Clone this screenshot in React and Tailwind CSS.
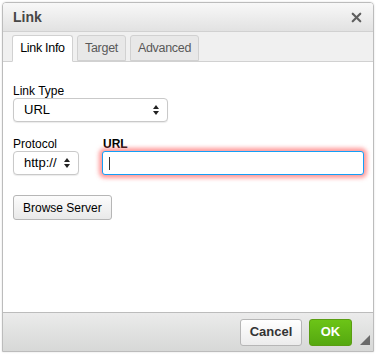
import { X } from 'lucide-react'

function SelectArrows() {
  return (
    <svg width="6" height="10" viewBox="0 0 6 10" className="shrink-0">
      <path d="M3 0 L6 4 L0 4 Z" fill="#222" />
      <path d="M3 10 L6 6 L0 6 Z" fill="#222" />
    </svg>
  )
}

function Select({ value, className }) {
  return (
    <div className={`flex items-center justify-between h-[24px] pl-[10px] pr-[8px] bg-white border border-[#c9c9c9] rounded-[4px] shadow-[0_1px_1px_rgba(0,0,0,0.08)] text-[13px] text-black ${className}`}>
      <span>{value}</span>
      <SelectArrows />
    </div>
  )
}

export default function App() {
  const tabs = [
    { label: 'Link Info', w: 'w-[61px]' },
    { label: 'Target', w: 'w-[49px]' },
    { label: 'Advanced', w: 'w-[69px]' },
  ]

  return (
    <div className="w-[376px] h-[355px] bg-white p-[2px] pb-[3px] font-['Liberation_Sans',Arial,sans-serif]">
      <div className="w-[372px] h-[350px] flex flex-col border border-[#bcbcbc] rounded-t-[4px] overflow-hidden shadow-[0_0_2px_rgba(0,0,0,0.15)]">

        {/* Title bar */}
        <div className="h-[29px] shrink-0 flex items-center justify-between px-[10px] bg-gradient-to-b from-[#f8f8f8] to-[#e2e2e2] border-b border-[#d1d1d1]">
          <span className="text-[14px] font-bold text-[#474747]">Link</span>
          <X size={15} strokeWidth={3.5} className="text-[#5f5f5f] mr-[-1px]" />
        </div>

        {/* Tabs */}
        <div className="h-[30px] shrink-0 flex items-end gap-[4px] pl-[9px] bg-[#f0f0f0] border-b border-[#d1d1d1]">
          {tabs.map((t, i) => (
            <div
              key={t.label}
              className={`${t.w} flex items-center justify-center text-[12.5px] tracking-[-0.3px] border border-[#d1d1d1] rounded-t-[3px] ${
                i === 0 ? 'bg-white border-b-white mb-[-1px] h-[27px] text-black' : 'h-[26px] bg-[#e8e8e8] text-[#595959]'
              }`}
            >
              {t.label}
            </div>
          ))}
        </div>

        {/* Content */}
        <div className="flex-1 bg-white px-[10px] pt-[22px] text-[12px] text-black">
          <div className="flex flex-col">
            <span className="leading-[14px]">Link Type</span>
            <Select value="URL" className="w-[155px]" />
          </div>

          <div className="flex gap-[23px] mt-[15px]">
            <div className="flex flex-col">
              <span className="leading-[14px]">Protocol</span>
              <Select value="http://" className="w-[66px]" />
            </div>
            <div className="flex flex-col flex-1">
              <span className="leading-[14px] font-bold pl-[1px]">URL</span>
              <div className="h-[24px] w-[262px] flex items-center pl-[6px] bg-white border border-[#139ff7] rounded-[3px] shadow-[0_0_4px_3px_rgba(255,110,110,0.7)]">
                <div className="w-px h-[13px] bg-[#333]" />
              </div>
            </div>
          </div>

          <div className="mt-[20px]">
            <div className="inline-flex items-center h-[25px] px-[9px] text-[12px] text-black bg-gradient-to-b from-[#fcfcfc] to-[#e9e9e9] border border-[#b6b6b6] rounded-[3px]">
              Browse Server
            </div>
          </div>
        </div>

        {/* Footer */}
        <div className="h-[39px] shrink-0 flex items-center justify-end gap-[7px] pr-[21px] bg-gradient-to-b from-[#ebebeb] to-[#d7d8d7] border-t border-[#bcbcbc] relative">
          <div className="h-[27px] w-[62px] flex items-center justify-center text-[13px] font-bold text-[#333] bg-gradient-to-b from-[#ffffff] to-[#ececec] border border-[#b6b6b6] rounded-[3px]">
            Cancel
          </div>
          <div className="h-[27px] w-[43px] flex items-center justify-center text-[13px] font-bold text-white bg-gradient-to-b from-[#6cc417] to-[#55a810] border border-[#5a9d12] rounded-[3px]">
            OK
          </div>
          <svg width="10" height="10" viewBox="0 0 10 10" className="absolute right-[3px] bottom-[6px]">
            <path d="M10 0 L10 10 L0 10 Z" fill="#6b6b6b" />
          </svg>
        </div>
      </div>
    </div>
  )
}
